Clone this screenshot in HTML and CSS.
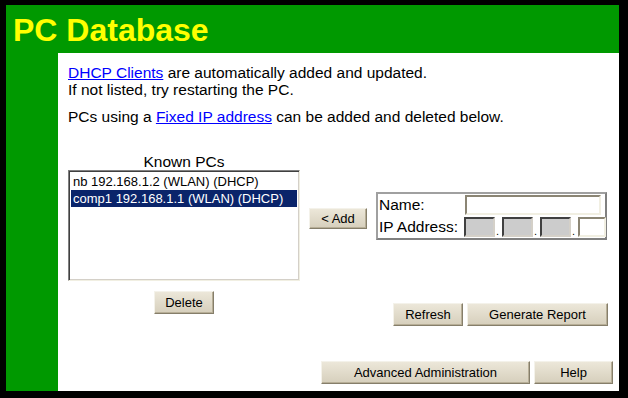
FILE: index.html
```html
<!DOCTYPE html>
<html>
<head>
<meta charset="utf-8">
<title>PC Database</title>
<link rel="stylesheet" href="styles.css">
</head>
<body>
<div class="frame">
  <div class="title">PC Database</div>
  <div class="main">
    <div class="side"></div>
    <div class="content">
      <p class="intro"><a href="#">DHCP Clients</a> are automatically added and updated.<br>If not listed, try restarting the PC.</p>
      <p class="intro">PCs using a <a href="#">Fixed IP address</a> can be added and deleted below.</p>
      <div class="pcs">
        <div class="left">
          <div class="label">Known PCs</div>
          <div class="listbox">
            <div class="item">nb 192.168.1.2 (WLAN) (DHCP)</div>
            <div class="item selected">comp1 192.168.1.1 (WLAN) (DHCP)</div>
          </div>
          <button class="btn btn-delete">Delete</button>
        </div>
        <div class="right">
          <div class="addrow">
            <button class="btn btn-add">&lt; Add</button>
            <div class="entry">
              <div class="elabel">Name:</div>
              <div class="field"><span class="input name-input"></span></div>
              <div class="elabel">IP Address:</div>
              <div class="field ip">
                <span class="input octet fixed"></span><span class="dot">.</span>
                <span class="input octet fixed"></span><span class="dot">.</span>
                <span class="input octet fixed"></span><span class="dot">.</span>
                <span class="input octet last"></span>
              </div>
            </div>
          </div>
          <div class="reports">
            <button class="btn btn-refresh">Refresh</button>
            <button class="btn btn-report">Generate Report</button>
          </div>
        </div>
      </div>
      <div class="bottom">
        <button class="btn btn-adv">Advanced Administration</button>
        <button class="btn btn-help">Help</button>
      </div>
    </div>
  </div>
</div>
</body>
</html>
```
FILE: styles.css
```css
html, body {
  margin: 0;
  padding: 0;
  background: #000;
}
body {
  width: 628px;
  height: 398px;
  overflow: hidden;
  font-family: "Liberation Sans", Arial, sans-serif;
}
.frame {
  margin: 5px 9px 7px 6px;
  height: 386px;
  background: #009900;
  display: flex;
  flex-direction: column;
}
.title {
  height: 48px;
  box-sizing: border-box;
  padding: 2px 0 0 7px;
  line-height: 46px;
  font-size: 32px;
  font-weight: bold;
  color: #ffff00;
}
.main {
  flex: 1;
  display: flex;
}
.side {
  width: 52px;
}
.content {
  flex: 1;
  background: #fff;
  padding: 11px 0 0 10px;
  font-size: 15.5px;
  line-height: 17px;
  color: #000;
  display: flex;
  flex-direction: column;
}
.intro {
  margin: 0 0 10px 0;
}
.intro a {
  color: #0000ff;
  text-decoration: underline;
}
.pcs {
  display: flex;
  margin-top: 18px;
}
.left {
  width: 232px;
  display: flex;
  flex-direction: column;
  align-items: center;
}
.label {
  line-height: 17px;
}
.listbox {
  width: 232px;
  height: 111px;
  box-sizing: border-box;
  border: 1px solid;
  border-color: #808080 #f1efe2 #f1efe2 #808080;
  box-shadow: inset 1px 1px 0 #404040, inset -1px -1px 0 #d4d0c8;
  padding: 2px 2px;
  font-size: 13px;
  line-height: 17px;
  background: #fff;
}
.item {
  padding-left: 2px;
  white-space: nowrap;
}
.item.selected {
  background: #0a246a;
  color: #fff;
}
.btn {
  font-family: "Liberation Sans", Arial, sans-serif;
  font-size: 13px;
  color: #000;
  height: 23px;
  padding: 0;
  box-sizing: border-box;
  border: 1px solid;
  border-color: #f4f2ea #857e6a #857e6a #f4f2ea;
  background: linear-gradient(#ece7d9, #d6cfbc);
  box-shadow: inset -1px -1px 0 #b7ae97;
}
.btn-delete {
  width: 60px;
  margin-top: 10px;
}
.right {
  width: 299px;
  margin-left: 9px;
  display: flex;
  flex-direction: column;
}
.addrow {
  display: flex;
  align-items: flex-start;
  margin-top: 39px;
}
.btn-add {
  width: 58px;
  height: 21px;
  margin-top: 16px;
}
.entry {
  margin-left: 9px;
  width: 231px;
  box-sizing: border-box;
  border: 2px solid;
  border-color: #a0a0a0 #808080 #808080 #a0a0a0;
  padding: 1px;
  display: grid;
  grid-template-columns: 85px 1fr;
  row-gap: 2px;
  font-size: 15.5px;
}
.elabel {
  line-height: 20px;
  height: 20px;
}
.field {
  display: flex;
  align-items: flex-end;
  height: 20px;
}
.input {
  display: block;
  box-sizing: border-box;
  height: 20px;
  border: 2px solid;
  background: #fff;
}
.name-input {
  width: 136px;
  margin-left: 1px;
  border-color: #8b8574 #f1efe2 #f1efe2 #8b8574;
}
.octet {
  width: 31px;
}
.octet.fixed {
  background: #cccccc;
  border-color: #404040 #d4d0c8 #d4d0c8 #404040;
}
.octet.last {
  width: 28px;
  border-color: #8b8574 #f1efe2 #f1efe2 #8b8574;
}
.dot {
  width: 7px;
  font-size: 11px;
  line-height: 12px;
  text-align: left;
  padding-left: 1px;
  box-sizing: border-box;
}
.reports {
  display: flex;
  justify-content: flex-end;
  gap: 4px;
  margin-top: 63px;
}
.btn-refresh {
  width: 70px;
}
.btn-report {
  width: 141px;
}
.bottom {
  display: flex;
  justify-content: flex-end;
  gap: 4px;
  padding-right: 6px;
  margin-top: 35px;
}
.btn-adv {
  width: 209px;
}
.btn-help {
  width: 79px;
}
```
